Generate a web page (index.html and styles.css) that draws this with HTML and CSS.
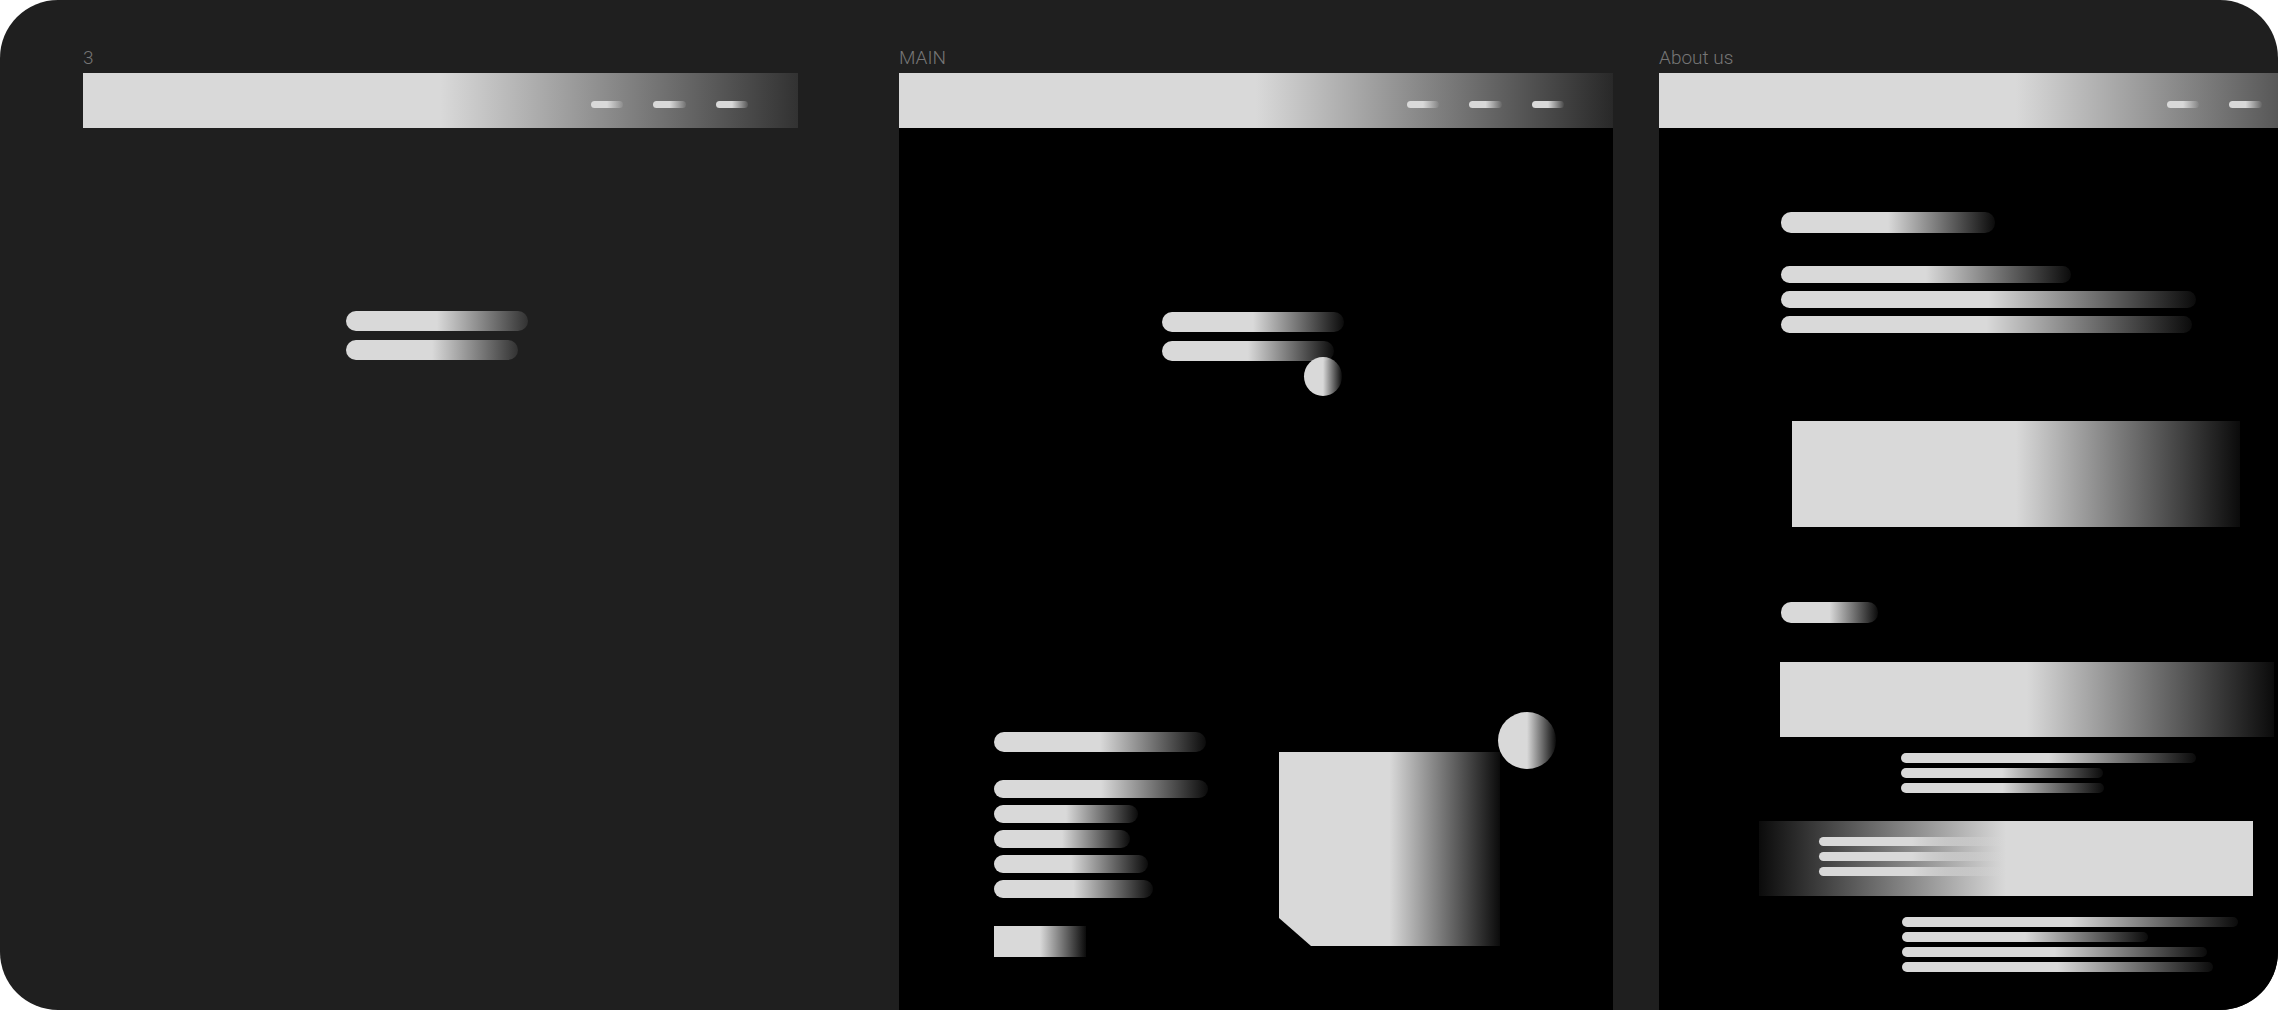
FILE: index.html
```html
<!DOCTYPE html>
<html lang="en">
<head>
<meta charset="utf-8">
<title>Wireframes</title>
<link rel="stylesheet" href="styles.css">
</head>
<body>
<div class="board">
  <section class="frame frame-one">
    <div class="label">3</div>
    <header class="bar g">
      <nav class="nav"><span class="nav-pill g"></span><span class="nav-pill nav-mid g"></span><span class="nav-pill g"></span></nav>
    </header>
    <div class="body body-plain">
      <div class="hero">
        <div class="pill hero-a g"></div>
        <div class="pill hero-b g"></div>
      </div>
    </div>
  </section>

  <section class="frame frame-main">
    <div class="label">MAIN</div>
    <header class="bar g">
      <nav class="nav"><span class="nav-pill g"></span><span class="nav-pill nav-mid g"></span><span class="nav-pill g"></span></nav>
    </header>
    <div class="body body-dark main-body">
      <div class="hero">
        <div class="pill hero-a g"></div>
        <div class="pill hero-b g"></div>
        <div class="dot dot-small g"></div>
      </div>
      <div class="lower">
        <div class="lower-text">
          <div class="pill lt-title g"></div>
          <div class="lt-list">
            <div class="pill lt-1 g"></div>
            <div class="pill lt-2 g"></div>
            <div class="pill lt-3 g"></div>
            <div class="pill lt-4 g"></div>
            <div class="pill lt-5 g"></div>
          </div>
          <div class="btn g"></div>
        </div>
        <div class="lower-media">
          <div class="card g"></div>
          <div class="dot dot-big g"></div>
        </div>
      </div>
    </div>
  </section>

  <section class="frame frame-about">
    <div class="label">About us</div>
    <header class="bar g">
      <nav class="nav"><span class="nav-pill g"></span><span class="nav-pill nav-mid g"></span><span class="nav-pill g"></span></nav>
    </header>
    <div class="body body-dark about-body">
      <div class="pill ab-title g"></div>
      <div class="ab-list">
        <div class="pill ab-l1 g"></div>
        <div class="pill ab-l2 g"></div>
        <div class="pill ab-l3 g"></div>
      </div>
      <div class="ab-banner g"></div>
      <div class="pill ab-tag g"></div>
      <div class="ab-wide g"></div>
      <div class="lines lines-one">
        <div class="line ln-a g"></div>
        <div class="line ln-b g"></div>
        <div class="line ln-c g"></div>
      </div>
      <div class="ab-wide-rev gr">
        <div class="line in-line g"></div>
        <div class="line in-line g"></div>
        <div class="line in-line g"></div>
      </div>
      <div class="lines lines-two">
        <div class="line ln-d g"></div>
        <div class="line ln-e g"></div>
        <div class="line ln-f g"></div>
        <div class="line ln-g g"></div>
      </div>
    </div>
  </section>
</div>
</body>
</html>
```

FILE: styles.css
```css
* { box-sizing: border-box; }

html, body {
  margin: 0;
  padding: 0;
  background: #ffffff;
}

body {
  font-family: Roboto, "Liberation Sans", sans-serif;
}

.g {
  background: linear-gradient(90deg, #d9d9d9 50%, rgba(217, 217, 217, 0.05) 100%);
}

.gr {
  background: linear-gradient(270deg, #d9d9d9 50%, rgba(217, 217, 217, 0.05) 100%);
}

.frame-one .g {
  background: linear-gradient(90deg, #d9d9d9 50%, rgba(217, 217, 217, 0.1) 100%);
}

.board {
  width: 2278px;
  height: 1010px;
  background: #1f1f1f;
  border-radius: 58px;
  overflow: hidden;
  display: flex;
  align-items: stretch;
  padding: 46px 0 0 83px;
}

.frame {
  flex: 0 0 714px;
  width: 714px;
  display: flex;
  flex-direction: column;
}

.frame-one { flex-basis: 715px; width: 715px; margin-right: 101px; }
.frame-main { margin-right: 46px; }

.label {
  height: 27px;
  line-height: 23px;
  font-size: 19px;
  font-weight: 300;
  color: #767676;
  white-space: nowrap;
}

.bar {
  height: 55px;
  flex: 0 0 55px;
}

.nav {
  display: flex;
  gap: 30px;
  padding: 28px 0 0 508px;
}

.nav-pill {
  width: 32px;
  height: 7px;
  border-radius: 4px;
}

.nav-mid { width: 33px; }

.body {
  flex: 1;
  display: flex;
  flex-direction: column;
  align-items: flex-start;
}

.body-dark { background: #000; }

.body-plain { padding: 183px 0 0 263px; }

.pill {
  height: 20px;
  border-radius: 10px;
}

.hero {
  position: relative;
  display: flex;
  flex-direction: column;
  gap: 9px;
}

.hero-a { width: 182px; }
.hero-b { width: 172px; }

.dot {
  position: absolute;
  border-radius: 50%;
}

.dot-small {
  width: 38px;
  height: 39px;
  left: 142px;
  top: 45px;
}

/* MAIN frame */
.main-body { padding: 184px 0 0 95px; }
.main-body .hero { margin-left: 168px; }

.lower {
  display: flex;
  margin-top: 351px;
}

.lower-text {
  width: 285px;
  padding-top: 20px;
  display: flex;
  flex-direction: column;
  align-items: flex-start;
}

.lt-title { width: 212px; }

.lt-list {
  margin-top: 28px;
  display: flex;
  flex-direction: column;
  gap: 7px;
}

.lt-list .pill { height: 18px; border-radius: 9px; }
.lt-1 { width: 214px; }
.lt-2 { width: 144px; }
.lt-3 { width: 136px; }
.lt-4 { width: 154px; }
.lt-5 { width: 159px; }

.btn {
  margin-top: 28px;
  width: 92px;
  height: 31px;
}

.lower-media {
  position: relative;
  padding-top: 40px;
}

.card {
  width: 221px;
  height: 194px;
  clip-path: polygon(0 0, 100% 0, 100% 100%, 32px 100%, 0 calc(100% - 28px));
}

.dot-big {
  width: 58px;
  height: 57px;
  left: 219px;
  top: 0;
}

/* About frame */
.about-body { padding: 84px 0 0 122px; }

.ab-title { width: 214px; height: 21px; }

.ab-list {
  margin-top: 33px;
  display: flex;
  flex-direction: column;
  gap: 8px;
}

.ab-list .pill { height: 17px; border-radius: 9px; }
.ab-l1 { width: 290px; }
.ab-l2 { width: 415px; }
.ab-l3 { width: 411px; }

.ab-banner {
  margin: 88px 0 0 11px;
  width: 448px;
  height: 106px;
}

.ab-tag {
  margin-top: 75px;
  width: 97px;
  height: 21px;
}

.ab-wide {
  margin: 39px 0 0 -1px;
  width: 494px;
  height: 75px;
}

.lines {
  display: flex;
  flex-direction: column;
  gap: 5px;
}

.line {
  height: 10px;
  border-radius: 5px;
}

.lines-one { margin: 16px 0 0 120px; }
.ln-a { width: 295px; }
.ln-b { width: 202px; }
.ln-c { width: 203px; }

.ab-wide-rev {
  margin: 28px 0 0 -22px;
  width: 494px;
  height: 75px;
  padding: 16px 0 0 60px;
  display: flex;
  flex-direction: column;
  gap: 6px;
}

.in-line { width: 186px; height: 9px; }

.lines-two { margin: 21px 0 0 121px; }
.ln-d { width: 336px; }
.ln-e { width: 246px; }
.ln-f { width: 305px; }
.ln-g { width: 311px; }
```
